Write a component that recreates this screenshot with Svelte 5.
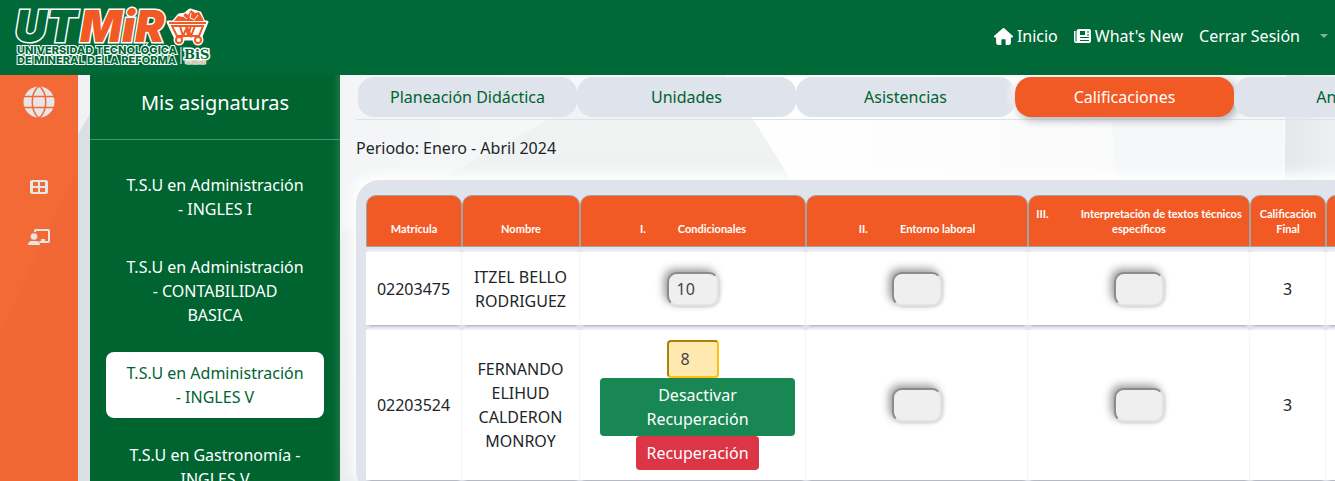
<script>
  const subjects = [
    'T.S.U en Administración - INGLES I',
    'T.S.U en Administración - CONTABILIDAD BASICA',
    'T.S.U en Administración - INGLES V',
    'T.S.U en Gastronomía - INGLES V'
  ];
  const tabs = ['Planeación Didáctica', 'Unidades', 'Asistencias', 'Calificaciones', 'Anexos'];
  const units = [
    ['I.', 'Condicionales'],
    ['II.', 'Entorno laboral'],
    ['III.', 'Interpretación de textos técnicos específicos']
  ];
  const students = [
    { id: '02203475', name: 'ITZEL BELLO RODRIGUEZ', grade: 10, final: 3, recovery: false },
    { id: '02203524', name: 'FERNANDO ELIHUD CALDERON MONROY', grade: 8, final: 3, recovery: true }
  ];
</script>

<div class="page">
  <header>
    <a class="logo" href="#inicio" aria-label="UTMiR, Universidad Tecnológica de Mineral de la Reforma">
      <svg width="200" height="64" viewBox="0 0 200 64">
        <g class="mark">
          <text x="3" y="37" class="ut">UT</text>
          <text x="68" y="37" class="mir">MiR</text>
        </g>
        <g class="legend">
          <text x="5" y="49">UNIVERSIDAD TECNOLÓGICA</text>
          <text x="5" y="59">DE MINERAL DE LA REFORMA</text>
        </g>
        <g transform="translate(-2 1)">
          <g stroke="#fff" stroke-width="3" fill="#fff" stroke-linejoin="round">
            <path d="M158 16h39l-7 17H166z" />
            <path d="M164 15l5-6 6-1 5-4 10 3 4 9z" />
            <circle cx="169" cy="34" r="4" /><circle cx="188" cy="34" r="4" />
          </g>
          <path d="M159 17h37M162 20h31l-4 10H167zM170 20l3 10 4-9 4 9 4-10M176 20l2 10 3-10" stroke="#f15a24" stroke-width="2" fill="none" />
          <g stroke="#f15a24" stroke-width="2" fill="#fff">
            <circle cx="169" cy="34" r="3" /><circle cx="188" cy="34" r="3" />
          </g>
          <path fill="#f15a24" d="M164 15l4-5 5 1 2-4 3 2 3-5 4 3 4-1 3 5 2 4z" />
          <path stroke="#fff" d="M173 10l4 3M181 7l-1 5 5 2M188 9l-3 4" fill="none" />
        </g>
        <path stroke="#fff" d="M169 42v17" />
        <text x="172" y="54" class="bis">BiS</text>
        <text x="173" y="59" class="small">UNIVERSITIES</text>
      </svg>
    </a>
    <nav class="top" aria-label="Principal">
      <a href="#inicio">
        <svg width="19" height="17" viewBox="0 0 576 512" fill="currentColor"><path d="M575.8 255.500c0 18-15 32.100-32 32.100h-32l.7 160.200c0 36-28 64.200-56 64.200H352v-144c0-18-14-32-32-32h-64c-18 0-32 14-32 32v144H128c-36 0-64-28-64-64V287.600H32c-18 0-32-14-32-32.100 0-9 3-17 10-24L266.400 8c7-7 15-8 22-8s15 2 21 7L564.800 231.500c8 7 12 15 11 24z" /></svg>
        Inicio
      </a>
      <a href="#news">
        <svg width="17" height="14" viewBox="0 0 17 14"><path fill="currentColor" fill-rule="evenodd" d="M5 0h10q2 0 2 2v10q0 2-2 2H2q-2 0-2-2V2h1.500v10q0 .5.500.500t.500-.500V2q0-2 2.500-2zm1 2v4h5V2zm7 .500v1h2v-1zm0 3v1h2v-1zM6 8v1h9V8zm0 3v1h9v-1z" /></svg>
        What's New
      </a>
      <a href="#salir">Cerrar Sesión</a>
      <button class="caret" aria-label="Más opciones"></button>
    </nav>
  </header>

  <div class="body">
    <svg class="backdrop" viewBox="0 0 1335 406" preserveAspectRatio="none" aria-hidden="true">
      <defs>
        <linearGradient id="left"><stop stop-color="#f0f1f3" /><stop offset="1" stop-color="#f7f8f8" /></linearGradient>
        <linearGradient id="mid" x2="0" y2="1"><stop stop-color="#f3f5f5" /><stop offset=".3" stop-color="#eef1f1" /><stop offset="1" stop-color="#e9edef" /></linearGradient>
        <linearGradient id="right"><stop stop-color="#fff" /><stop offset="1" stop-color="#f7f8f9" /></linearGradient>
        <linearGradient id="edge"><stop stop-color="#e3e7e9" /><stop offset="1" stop-color="#eef1f3" /></linearGradient>
      </defs>
      <path fill="url(#mid)" d="M0 0h1000v406H0z" />
      <path fill="url(#left)" d="M0 0h631L445 101 0 343z" />
      <path fill="url(#right)" d="M725 0h610v406H982z" />
      <path fill="#f5f7f8" d="M1106 0h176v406h-132z" />
      <path fill="url(#edge)" d="M1286 0h49v406h-54z" />
      <path fill="#d9e0e3" d="M98 25v381H60V90z" />
    </svg>

    <aside class="rail">
      <a href="#portal" aria-label="Portal">
        <svg width="32" height="32" viewBox="0 0 32 32"><circle cx="16" cy="16" r="15.500" fill="currentColor" /><path d="M0 10.500h32M0 21.500h32M16 0C7 7 7 25 16 32M16 0c9 7 9 25 0 32" stroke="#f26735" stroke-width="1.500" fill="none" /></svg>
      </a>
      <a href="#tablero" aria-label="Tablero">
        <svg width="18" height="14" viewBox="0 0 18 14"><path fill="currentColor" fill-rule="evenodd" d="M2 0h14q2 0 2 2v10q0 2-2 2H2q-2 0-2-2V2q0-2 2-2zm1 2v4h5V2zm7 0v4h5V2zM3 8v4h5V8zm7 0v4h5V8z" /></svg>
      </a>
      <a href="#clases" aria-label="Clases">
        <svg width="22" height="17" viewBox="0 0 22 17" fill="currentColor"><circle cx="6" cy="7.500" r="3.300" /><path d="M0 16q0-4 4-4h4q4 0 4 4zM6 3V2q0-2 2-2h12q2 0 2 2v10q0 2-2 2h-8l-1-2h2v-2h4v2h3V2H8v1z" /></svg>
      </a>
    </aside>

    <nav class="subjects" aria-label="Mis asignaturas">
      <h2>Mis asignaturas</h2>
      <ul>
        {#each subjects as subject, i}
          <li><a class:active={i === 2} href="#asignatura-{i}">{subject}</a></li>
        {/each}
      </ul>
    </nav>

    <main>
      <div class="tabs" role="tablist">
        {#each tabs as tab, i}
          <button role="tab" aria-selected={i === 3} class:selected={i === 3}>{tab}</button>
        {/each}
      </div>
      <p class="period">Periodo: Enero - Abril 2024</p>
      <div class="panel">
        <table>
          <colgroup>
            <col class="c-id" /><col class="c-name" /><col class="c-first" /><col class="c-unit" /><col class="c-unit" /><col class="c-final" /><col class="c-final" />
          </colgroup>
          <thead>
            <tr>
              <th>Matrícula</th>
              <th>Nombre</th>
              {#each units as [number, title]}
                <th><span class="number">{number}</span>{title}</th>
              {/each}
              <th>Calificación Final</th>
              <th></th>
            </tr>
          </thead>
          <tbody>
            {#each students as s}
              <tr>
                <td>{s.id}</td>
                <td>{s.name}</td>
                <td>
                  {#if s.recovery}
                    <input class="grade warning" aria-label="Condicionales, {s.name}" value={s.grade} />
                    <div class="actions">
                      <button class="success">Desactivar Recuperación</button>
                      <button class="danger">Recuperación</button>
                    </div>
                  {:else}
                    <input class="grade filled" aria-label="Condicionales, {s.name}" value={s.grade} />
                  {/if}
                </td>
                <td><input class="grade" aria-label="Entorno laboral, {s.name}" /></td>
                <td><input class="grade" aria-label="Interpretación de textos, {s.name}" /></td>
                <td>{s.final}</td>
                <td></td>
              </tr>
            {/each}
          </tbody>
        </table>
      </div>
    </main>
  </div>
</div>

<style>
  :global(body) { overflow: hidden; }
  * { box-sizing: border-box; }
  .page {
    height: 100vh;
    display: flex;
    flex-direction: column;
    overflow: hidden;
    font: 16px/24px "Noto Sans", sans-serif;
    color: #212529;
  }
  a { color: inherit; text-decoration: none; }
  svg { display: block; flex: none; }
  button, input { font: inherit; margin: 0; }

  header {
    flex: none;
    display: flex;
    align-items: center;
    justify-content: space-between;
    padding: 5px 3px 6px 12px;
    background: #006937;
    color: #fff;
  }
  .logo svg { overflow: visible; }
  .mark { font: italic 900 44px Inter, sans-serif; stroke: #fff; stroke-width: 3px; paint-order: stroke; }
  .ut { fill: #006937; }
  .mir { fill: #f15a24; }
  .legend { font: 800 11px Inter, sans-serif; fill: #006937; stroke: #fff; stroke-width: 2px; paint-order: stroke; }
  .bis { font: bold 13px "DejaVu Serif", serif; fill: #006937; stroke: #fff; stroke-width: 3px; paint-order: stroke; }
  .small { font: bold 3px "Liberation Sans", sans-serif; fill: #b7a36a; stroke: #fff; stroke-width: 1px; paint-order: stroke; }
  .top { display: flex; align-items: center; gap: 16px; padding-bottom: 2px; }
  .top a { display: flex; align-items: center; gap: 4px; }
  .caret { display: flex; border: 0; background: none; padding: 4px; }
  .caret::before { content: ""; border: 4px solid transparent; border-top-color: #7fb49b; border-bottom: 0; }

  .body { position: relative; flex: 1; min-height: 0; display: flex; }
  .backdrop { position: absolute; inset: 0; width: 100%; height: 100%; z-index: -1; }

  .rail {
    flex: none;
    width: 78px;
    margin-right: 12px;
    padding-top: 11px;
    display: flex;
    flex-direction: column;
    align-items: center;
    background: linear-gradient(115deg, #f46a37 0 45%, #f16735 45% 100%);
    color: #e6e6e6;
  }
  .rail a { display: flex; align-items: center; justify-content: center; height: 50px; }
  .rail a:first-child { height: 32px; margin-bottom: 44px; }

  .subjects {
    flex: none;
    width: 250px;
    background: linear-gradient(90deg, #006431 0 97%, #187342 100%);
    color: #fff;
    text-align: center;
  }
  h2 { margin: 0; padding: 15px 0 24px; font-size: 20px; line-height: 25px; font-weight: 400; border-bottom: 1px solid #4d936c; }
  ul { list-style: none; margin: 0; padding: 24px 16px; display: flex; flex-direction: column; gap: 16px; }
  li a { display: block; padding: 9px 20px; border-radius: 8px; }
  li a.active { background: #fff; color: #006431; }

  main { flex: 1; min-width: 0; padding: 2px 0 0 16px; overflow: hidden; }
  .tabs { display: flex; padding: 0 2px 2px; border-bottom: 1px solid #dee2e6; }
  .tabs button {
    flex: none;
    width: 219px;
    height: 40px;
    padding: 0;
    border: 0;
    border-radius: 16px;
    background: #dfe3eb;
    color: #006431;
  }
  .tabs button.selected {
    background: #f15a24;
    color: #fff;
    box-shadow: 3px 3px 8px #a9acb5, -3px -3px 8px #fff;
  }
  .period { margin: 16px 0 20px; }
  .panel {
    width: max-content;
    min-width: 100%;
    padding: 10px;
    border-radius: 24px;
    background: #dfe3eb;
    box-shadow: -4px -6px 14px #fff;
  }
  table { width: 1036px; table-layout: fixed; border-collapse: separate; border-spacing: 0 5px; text-align: center; }
  .c-id { width: 96px; }
  .c-name { width: 118px; }
  .c-first { width: 226px; }
  .c-unit { width: 222px; }
  .c-final { width: 76px; }
  th {
    height: 52px;
    padding: 10px 4px;
    vertical-align: bottom;
    border: 1px solid #a3a3a0;
    border-radius: 10px 10px 0 0;
    background: #f15a24;
    color: #fff;
    font: bold 11px/15px Lato, sans-serif;
  }
  .number { display: inline-block; margin-right: 32px; }
  td { padding: 10px; background: #fff; box-shadow: 0 4px 3px -3px #9aa1ad, 0 -4px 3px -2px #f3f4f8; border-right: 1px solid #f5f5f6; }
  td:nth-child(-n + 2) { padding: 10px 6px; }
  tbody tr:first-child td { height: 73px; padding-top: 0; padding-bottom: 0; }

  .grade {
    display: block;
    width: 50px;
    height: 34px;
    margin: 0 auto;
    padding: 0 8px;
    border: 2px solid #e3e3e3;
    border-top-color: #8b8b8b;
    border-left-color: #8b8b8b;
    border-radius: 10px;
    background: #efefef;
    box-shadow: -3px -3px 8px #999, 1px 1px 3px #ddd;
    color: #444;
  }
  .filled { width: 52px; }
  .warning {
    width: 52px;
    height: 38px;
    padding: 0 12px;
    border-color: #ab8205 #ffc107 #ffc107 #ab8205;
    border-radius: 4px;
    background: #ffe9b0;
    box-shadow: none;
  }
  .actions { display: flex; flex-direction: column; align-items: center; padding-left: 10px; }
  .actions button { border: 0; border-radius: 4px; padding: 5px 10px; line-height: 24px; color: #fff; }
  .success { width: 100%; background: #198754; }
  .actions .success { padding: 5px 40px; }
  .danger { background: #dc3545; }
</style>
